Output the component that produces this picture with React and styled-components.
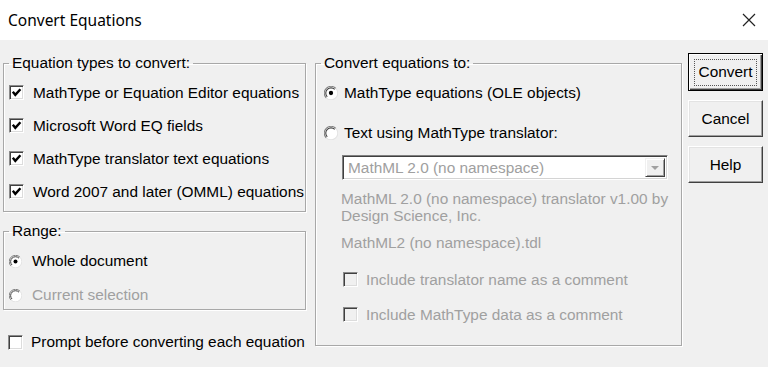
import styled, { createGlobalStyle } from "styled-components";

const GlobalStyle = createGlobalStyle`
  html, body {
    margin: 0;
    padding: 0;
    background: #f0f0f0;
  }
  body {
    font-family: "Liberation Sans", Arial, sans-serif;
    font-size: 15.4px;
    color: #000;
  }
`;

const Window = styled.div`
  width: 768px;
  height: 367px;
  display: flex;
  flex-direction: column;
  background: #f0f0f0;
  overflow: hidden;
`;

const TitleBar = styled.div`
  height: 40px;
  flex: 0 0 40px;
  background: #fff;
  display: flex;
  align-items: center;
  justify-content: space-between;
  padding: 0 12px 0 8px;
  box-sizing: border-box;
`;

const Title = styled.span`
  font-family: "Noto Sans", "Open Sans", sans-serif;
  font-size: 15.5px;
  color: #000;
`;

const Body = styled.div`
  display: flex;
  align-items: flex-start;
  padding: 13px 0 0 3px;
`;

const Column = styled.div`
  display: flex;
  flex-direction: column;
  width: ${({ $width }) => $width}px;
  margin-right: ${({ $gap }) => $gap || 0}px;
`;

const Group = styled.fieldset`
  margin: ${({ $top }) => $top || 0}px 0 0 0;
  padding: 0;
  height: ${({ $height }) => $height}px;
  box-sizing: border-box;
  border: 1px solid #a8a8a8;
  box-shadow: inset 1px 1px 0 #fff, 1px 1px 0 #fff;
  min-width: 0;
`;

const Legend = styled.legend`
  margin-left: 5px;
  padding: 0 3px;
  line-height: 18px;
  font-size: 15.4px;
`;

const GroupContent = styled.div`
  display: flex;
  flex-direction: column;
  padding: ${({ $pad }) => $pad || "4px 0 0 5px"};
`;

const OptionRow = styled.label`
  display: flex;
  align-items: center;
  height: ${({ $h }) => $h || 33}px;
  gap: ${({ $gap }) => $gap || 9}px;
  padding-left: ${({ $indent }) => $indent || 0}px;
  margin-top: ${({ $top }) => $top || 0}px;
  color: ${({ $disabled }) => ($disabled ? "#a0a0a0" : "#000")};
  white-space: nowrap;
`;

const Box = styled.span`
  width: 15px;
  height: 15px;
  flex: 0 0 15px;
  box-sizing: border-box;
  border-top: 1px solid #8a8a8a;
  border-left: 1px solid #8a8a8a;
  border-right: 1px solid #fff;
  border-bottom: 1px solid #fff;
  box-shadow: inset 1px 1px 0 #404040, inset -1px -1px 0 #dcdcdc;
  background: ${({ $disabled }) => ($disabled ? "#f0f0f0" : "#fff")};
  display: flex;
  align-items: center;
  justify-content: center;
`;

const Check = ({ checked, disabled }) => (
  <Box $disabled={disabled}>
    {checked && (
      <svg width="11" height="11" viewBox="0 0 11 11">
        <path d="M1.8 4.8 L4.3 7.8 L9.4 2.2" fill="none" stroke="#000" strokeWidth="2.4" />
      </svg>
    )}
  </Box>
);

const Radio = ({ checked, size = 13 }) => (
  <svg width={size} height={size} viewBox="0 0 13 13" style={{ flex: `0 0 ${size}px` }}>
    <circle cx="6.5" cy="6.5" r="6" fill="#fff" />
    <path d="M11 2.2 A6 6 0 0 0 2 11" fill="none" stroke="#808080" strokeWidth="1" />
    <path d="M10 3.2 A4.8 4.8 0 0 0 3 10" fill="none" stroke="#404040" strokeWidth="1" />
    <path d="M2 11 A6 6 0 0 0 11 2.2" fill="none" stroke="#e4e4e4" strokeWidth="1" />
    {checked && <circle cx="6.5" cy="6.5" r="2" fill="#000" />}
  </svg>
);

const Combo = styled.div`
  margin: 2px 0 0 18px;
  width: 326px;
  height: 25px;
  box-sizing: border-box;
  border-top: 1px solid #808080;
  border-left: 1px solid #808080;
  border-right: 1px solid #fff;
  border-bottom: 1px solid #fff;
  box-shadow: inset 1px 1px 0 #404040, inset -1px -1px 0 #d4d4d4;
  background: #fff;
  display: flex;
  align-items: center;
  padding: 2px;
  color: #a0a0a0;
`;

const ComboText = styled.span`
  flex: 1;
  padding-left: 3px;
`;

const ComboArrow = styled.span`
  width: 20px;
  height: 19px;
  box-sizing: border-box;
  background: #f0f0f0;
  border-top: 1px solid #f0f0f0;
  border-left: 1px solid #f0f0f0;
  border-right: 1px solid #404040;
  border-bottom: 1px solid #404040;
  box-shadow: inset 1px 1px 0 #fff, inset -1px -1px 0 #a0a0a0;
  display: flex;
  align-items: center;
  justify-content: center;
`;

const Note = styled.div`
  margin: ${({ $top }) => $top || 0}px 0 0 17px;
  line-height: 17px;
  color: #a0a0a0;
`;

const Button = styled.button`
  width: 75px;
  height: ${({ $h }) => $h || 37}px;
  margin-top: ${({ $top }) => $top || 0}px;
  padding: 0;
  box-sizing: border-box;
  font-family: "Liberation Sans", Arial, sans-serif;
  font-size: 15.4px;
  color: #000;
  background: #f0f0f0;
  border-top: 1px solid #fff;
  border-left: 1px solid #fff;
  border-right: 1px solid #404040;
  border-bottom: 1px solid #404040;
  box-shadow: inset -1px -1px 0 #a0a0a0, inset 1px 1px 0 #e3e3e3;
  display: flex;
  align-items: center;
  justify-content: center;
`;

const DefaultButton = styled(Button)`
  border: 1px solid #000;
  box-shadow: inset 1px 1px 0 #fff, inset -1px -1px 0 #404040, inset -2px -2px 0 #a0a0a0;
`;

const FocusRing = styled.span`
  display: flex;
  align-items: center;
  justify-content: center;
  width: 63px;
  height: 27px;
  border: 1px dotted #555;
  box-sizing: border-box;
`;

export default function App() {
  return (
    <>
      <GlobalStyle />
      <Window>
        <TitleBar>
          <Title>Convert Equations</Title>
          <svg width="14" height="14" viewBox="0 0 14 14">
            <path d="M1 1 L13 13 M13 1 L1 13" stroke="#222" strokeWidth="1.2" />
          </svg>
        </TitleBar>
        <Body>
          <Column $width={303} $gap={9}>
            <Group $top={1} $height={158}>
              <Legend>Equation types to convert:</Legend>
              <GroupContent>
                <OptionRow><Check checked />MathType or Equation Editor equations</OptionRow>
                <OptionRow><Check checked />Microsoft Word EQ fields</OptionRow>
                <OptionRow><Check checked />MathType translator text equations</OptionRow>
                <OptionRow><Check checked />Word 2007 and later (OMML) equations</OptionRow>
              </GroupContent>
            </Group>
            <Group $top={10} $height={88}>
              <Legend>Range:</Legend>
              <GroupContent>
                <OptionRow $h={34} $gap={10}><Radio checked />Whole document</OptionRow>
                <OptionRow $h={34} $gap={10} $disabled><Radio />Current selection</OptionRow>
              </GroupContent>
            </Group>
            <OptionRow $h={34} $top={15} $indent={5} $gap={8}>
              <Check />Prompt before converting each equation
            </OptionRow>
          </Column>
          <Column $width={367} $gap={6}>
            <Group $top={1} $height={292}>
              <Legend>Convert equations to:</Legend>
              <GroupContent $pad="1px 0 0 8px">
                <OptionRow $h={40} $gap={6}><Radio checked size={14} />MathType equations (OLE objects)</OptionRow>
                <OptionRow $h={40} $gap={6}><Radio size={14} />Text using MathType translator:</OptionRow>
                <Combo>
                  <ComboText>MathML 2.0 (no namespace)</ComboText>
                  <ComboArrow>
                    <svg width="8" height="4" viewBox="0 0 8 4">
                      <path d="M0 0 L8 0 L4 4 Z" fill="#a0a0a0" />
                    </svg>
                  </ComboArrow>
                </Combo>
                <Note $top={10}>
                  MathML 2.0 (no namespace) translator v1.00 by
                  <br />
                  Design Science, Inc.
                </Note>
                <Note $top={10}>MathML2 (no namespace).tdl</Note>
                <OptionRow $h={35} $top={11} $indent={19} $gap={8} $disabled>
                  <Check disabled />Include translator name as a comment
                </OptionRow>
                <OptionRow $h={35} $indent={19} $gap={8} $disabled>
                  <Check disabled />Include MathType data as a comment
                </OptionRow>
              </GroupContent>
            </Group>
          </Column>
          <Column $width={75}>
            <DefaultButton $h={38}>
              <FocusRing>Convert</FocusRing>
            </DefaultButton>
            <Button $top={9}>Cancel</Button>
            <Button $top={9}>Help</Button>
          </Column>
        </Body>
      </Window>
    </>
  );
}
